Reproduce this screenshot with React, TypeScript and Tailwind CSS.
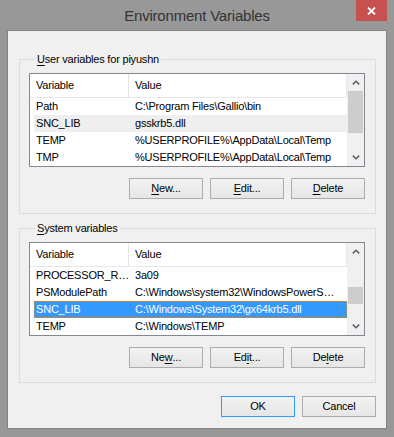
import type { ReactNode } from 'react';

type Row = {
  name: string;
  value: string;
  state?: 'selected' | 'inactive';
};

const userRows: Row[] = [
  { name: 'Path', value: 'C:\\Program Files\\Gallio\\bin' },
  { name: 'SNC_LIB', value: 'gsskrb5.dll', state: 'inactive' },
  { name: 'TEMP', value: '%USERPROFILE%\\AppData\\Local\\Temp' },
  { name: 'TMP', value: '%USERPROFILE%\\AppData\\Local\\Temp' },
];

const systemRows: Row[] = [
  { name: 'PROCESSOR_R…', value: '3a09' },
  { name: 'PSModulePath', value: 'C:\\Windows\\system32\\WindowsPowerS…' },
  { name: 'SNC_LIB', value: 'C:\\Windows\\System32\\gx64krb5.dll', state: 'selected' },
  { name: 'TEMP', value: 'C:\\Windows\\TEMP' },
];

function Chevron({ down }: { down?: boolean }) {
  return (
    <svg width="8" height="5" viewBox="0 0 8 5" className={down ? 'rotate-180' : ''}>
      <path d="M0.8 4.4 L4 1.2 L7.2 4.4" fill="none" stroke="#606060" strokeWidth="1.5" />
    </svg>
  );
}

function Button({ children, isDefault }: { children: ReactNode; isDefault?: boolean }) {
  return (
    <div
      className={`w-[74px] h-[21px] flex items-center justify-center border bg-gradient-to-b from-[#f2f2f2] to-[#e6e6e6] text-black ${
        isDefault ? 'border-[#3399ff]' : 'border-[#acacac]'
      }`}
    >
      {children}
    </div>
  );
}

function ListView({ rows, thumbTop, thumbHeight }: { rows: Row[]; thumbTop: number; thumbHeight: number }) {
  return (
    <div className="h-[94px] border border-[#828790] bg-white flex">
      <div className="flex-1 flex flex-col overflow-hidden">
        {/* Column header */}
        <div className="h-[24px] flex border-b border-[#e3e8ee] shrink-0">
          <div className="w-[99px] pl-[6px] leading-[23px] border-r border-[#e5e5e5]">Variable</div>
          <div className="flex-1 pl-[6px] leading-[23px] border-r border-[#e3e8ee]">Value</div>
        </div>

        {rows.map((row) => (
          <div
            key={row.name}
            className={`h-[17px] ml-[4px] flex items-center border shrink-0 whitespace-nowrap ${
              row.state === 'selected'
                ? 'bg-[#3399ff] text-white border-dotted border-[#c98a44]'
                : row.state === 'inactive'
                  ? 'bg-[#efefef] border-transparent'
                  : 'border-transparent'
            }`}
          >
            <div className="w-[94px] pl-[1px] overflow-hidden">{row.name}</div>
            <div className="flex-1 pl-[6px] overflow-hidden">{row.value}</div>
          </div>
        ))}
      </div>

      {/* Scrollbar */}
      <div className="w-[17px] bg-[#f0f0f0] flex flex-col">
        <div className="h-[17px] flex items-center justify-center">
          <Chevron />
        </div>
        <div className="flex-1">
          <div className="mx-px bg-[#cdcdcd]" style={{ marginTop: thumbTop, height: thumbHeight }} />
        </div>
        <div className="h-[17px] flex items-center justify-center">
          <Chevron down />
        </div>
      </div>
    </div>
  );
}

function Group({ legend, children }: { legend: ReactNode; children: ReactNode }) {
  return (
    <fieldset className="ml-[11px] mr-[10px] border border-[#dcdcdc] pl-[9px] pr-[10px] pt-[7px] pb-[14px]">
      <legend className="ml-[6px] px-[2px] leading-[14px]">{legend}</legend>
      {children}
    </fieldset>
  );
}

export default function App() {
  return (
    <div className="w-[394px] h-[437px] bg-[#989898] flex flex-col font-['Liberation_Sans',Arial,sans-serif] text-[11px] tracking-[-0.2px] text-black">
      {/* Title bar */}
      <div className="h-[30px] grid grid-cols-[1fr_auto_1fr] shrink-0">
        <div />
        <div className="self-center text-[15px] leading-none text-[#333333]">Environment Variables</div>
        <div className="justify-self-end mr-[7px] w-[31px] h-[21px] bg-[#c75050] flex items-center justify-center">
          <svg width="9" height="8" viewBox="0 0 9 8">
            <path d="M1 0.5 L8 7.5 M8 0.5 L1 7.5" stroke="white" strokeWidth="1.8" />
          </svg>
        </div>
      </div>

      {/* Client area */}
      <div className="flex-1 mx-[7px] mb-[8px] border border-[#838383] bg-[#f0f0f0] flex flex-col">
        <div className="mt-[21px]">
          <Group
            legend={
              <>
                <u className="underline-offset-[2px]">U</u>ser variables for piyushn
              </>
            }
          >
            <ListView rows={userRows} thumbTop={0} thumbHeight={42} />
            <div className="mt-[11px] flex justify-end gap-[7px]">
              <Button>
                <u className="underline-offset-[2px]">N</u>ew...
              </Button>
              <Button>
                <u className="underline-offset-[2px]">E</u>dit...
              </Button>
              <Button>
                <u className="underline-offset-[2px]">D</u>elete
              </Button>
            </div>
          </Group>
        </div>

        <div className="mt-[7px]">
          <Group
            legend={
              <>
                <u className="underline-offset-[2px]">S</u>ystem variables
              </>
            }
          >
            <ListView rows={systemRows} thumbTop={27} thumbHeight={17} />
            <div className="mt-[11px] flex justify-end gap-[7px]">
              <Button>
                Ne<u className="underline-offset-[2px]">w</u>...
              </Button>
              <Button>
                Ed<u className="underline-offset-[2px]">i</u>t...
              </Button>
              <Button>
                De<u className="underline-offset-[2px]">l</u>ete
              </Button>
            </div>
          </Group>
        </div>

        <div className="mt-[13px] mr-[10px] flex justify-end gap-[7px]">
          <Button isDefault>OK</Button>
          <Button>Cancel</Button>
        </div>
      </div>
    </div>
  );
}
